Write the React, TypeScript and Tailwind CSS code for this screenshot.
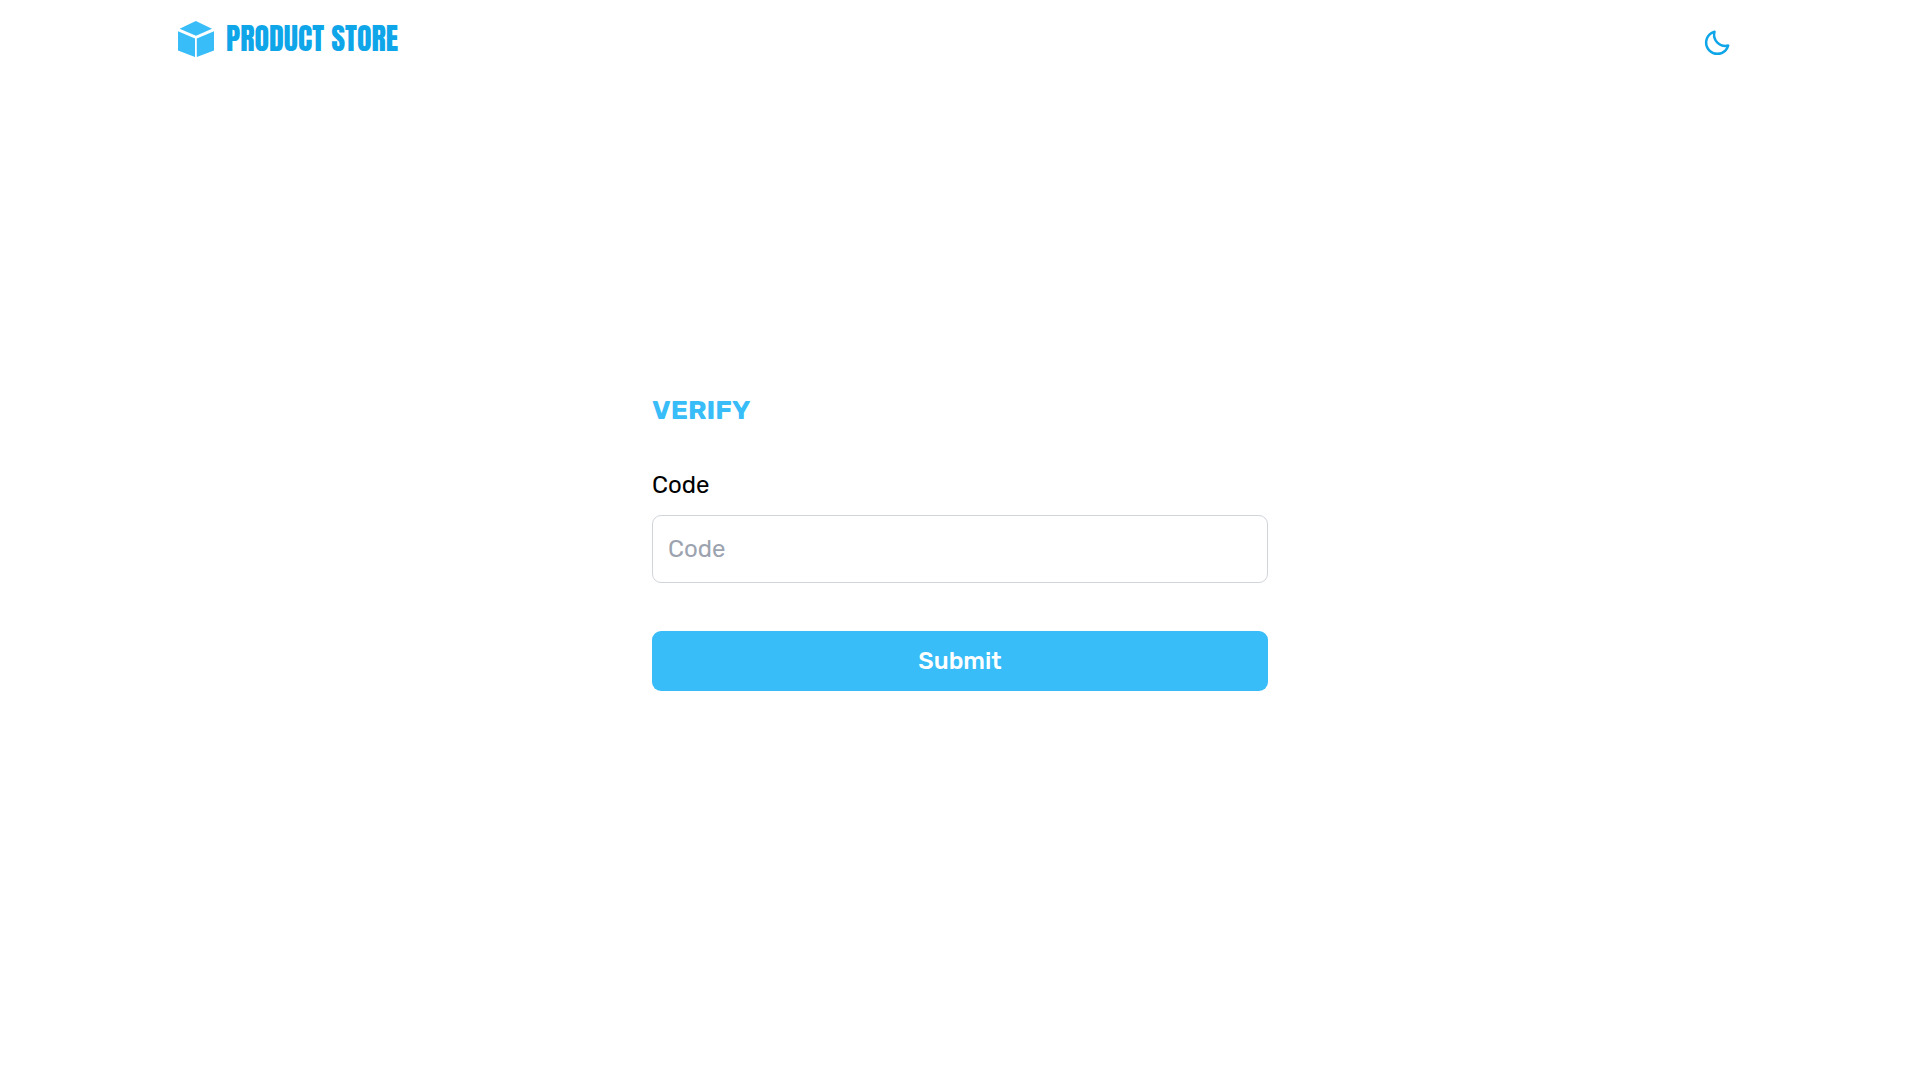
import { useState } from "react";
import type { FormEvent } from "react";
import { BiMoon } from "react-icons/bi";

function CubeLogo() {
  return (
    <svg viewBox="0 0 36 36" className="size-9 fill-[#38bdf8]" aria-hidden="true">
      <path d="M17.8 0 34 7.7 18 14.8 1.6 7.7Z" />
      <path d="M0 10.2 17 17.4V36L0 29.5Z" />
      <path d="M36 10.2V29.5L18.8 36V17.4Z" />
    </svg>
  );
}

function Header() {
  return (
    <header className="mx-auto flex h-20 w-full max-w-[1600px] items-start justify-between px-[18px] pt-4">
      <a href="#" className="flex h-[46px] items-center gap-3 text-[#0ea5e9]">
        <CubeLogo />
        <span className="font-[Anton,'Roboto_Condensed',sans-serif] text-[30px] leading-none whitespace-nowrap">
          PRODUCT STORE
        </span>
      </a>
      <button type="button" aria-label="Toggle dark mode" className="px-2.5 py-3 text-[#0ea5e9]">
        <BiMoon className="size-[30px]" />
      </button>
    </header>
  );
}

export default function App() {
  const [code, setCode] = useState("");
  const submit = (event: FormEvent) => event.preventDefault();

  return (
    <div className="flex min-h-screen flex-col bg-white font-[Rubik,Roboto,sans-serif] text-2xl text-black">
      <Header />
      <main className="flex flex-1 items-center justify-center pb-20">
        <form onSubmit={submit} className="flex w-full max-w-[616px] flex-col">
          <h1 className="text-[27px] leading-[42px] font-bold text-[#38bdf8]">VERIFY</h1>
          <label htmlFor="code" className="mt-9 leading-9">
            Code
          </label>
          <input
            id="code"
            type="text"
            placeholder="Code"
            value={code}
            onChange={(event) => setCode(event.target.value)}
            className="mt-3 h-[68px] rounded-[9px] border border-[#d1d5db] px-[15px] outline-none placeholder:text-[#9ca3af] focus:border-[#38bdf8]"
          />
          <button type="submit" className="mt-12 h-[60px] rounded-[9px] bg-[#38bdf8] font-medium text-white">
            Submit
          </button>
        </form>
      </main>
    </div>
  );
}
